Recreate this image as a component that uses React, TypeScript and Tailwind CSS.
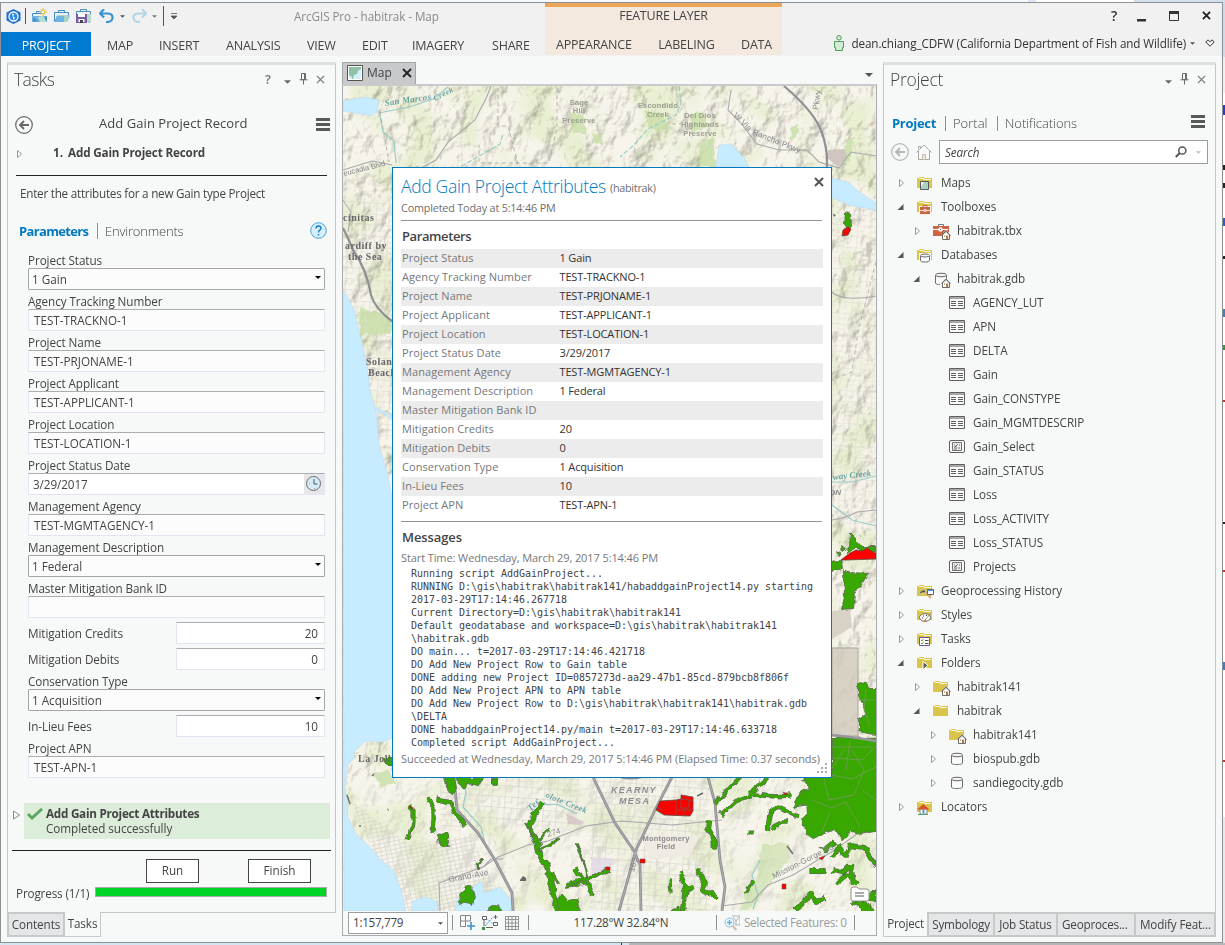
import React from "react";

const ribbonTabs = [
  { label: "MAP", cls: "w-[58px] pl-4" },
  { label: "INSERT", cls: "w-[67px] pl-[10px]" },
  { label: "ANALYSIS", cls: "w-[81px] pl-[10px]" },
  { label: "VIEW", cls: "w-[55px] pl-[10px]" },
  { label: "EDIT", cls: "w-[50px] pl-[10px]" },
  { label: "IMAGERY", cls: "w-[79px] pl-[10px]" },
  { label: "SHARE", cls: "w-[60px] pl-[11px]" },
];

const attributes = [
  ["Project Status", "1 Gain"],
  ["Agency Tracking Number", "TEST-TRACKNO-1"],
  ["Project Name", "TEST-PRJONAME-1"],
  ["Project Applicant", "TEST-APPLICANT-1"],
  ["Project Location", "TEST-LOCATION-1"],
  ["Project Status Date", "3/29/2017"],
  ["Management Agency", "TEST-MGMTAGENCY-1"],
  ["Management Description", "1 Federal"],
  ["Master Mitigation Bank ID", ""],
  ["Mitigation Credits", "20"],
  ["Mitigation Debits", "0"],
  ["Conservation Type", "1 Acquisition"],
  ["In-Lieu Fees", "10"],
  ["Project APN", "TEST-APN-1"],
];

const messages = [
  "Running script AddGainProject...",
  "RUNNING D:\\gis\\habitrak\\habitrak141/habaddgainProject14.py starting",
  "2017-03-29T17:14:46.267718",
  "Current Directory=D:\\gis\\habitrak\\habitrak141",
  "Default geodatabase and workspace=D:\\gis\\habitrak\\habitrak141",
  "\\habitrak.gdb",
  "DO main... t=2017-03-29T17:14:46.421718",
  "DO Add New Project Row to Gain table",
  "DONE adding new Project ID=0857273d-aa29-47b1-85cd-879bcb8f806f",
  "DO Add New Project APN to APN table",
  "DO Add New Project Row to D:\\gis\\habitrak\\habitrak141\\habitrak.gdb",
  "\\DELTA",
  "DONE habaddgainProject14.py/main t=2017-03-29T17:14:46.633718",
  "Completed script AddGainProject...",
];

type Node = { label: string; level: 0 | 1 | 2; icon: string; arrow?: "open" | "closed" };
const tree: Node[] = [
  { label: "Maps", level: 0, icon: "f-map", arrow: "closed" },
  { label: "Toolboxes", level: 0, icon: "f-tool", arrow: "open" },
  { label: "habitrak.tbx", level: 1, icon: "tbx", arrow: "closed" },
  { label: "Databases", level: 0, icon: "f-db", arrow: "open" },
  { label: "habitrak.gdb", level: 1, icon: "db-home", arrow: "open" },
  { label: "AGENCY_LUT", level: 2, icon: "table" },
  { label: "APN", level: 2, icon: "table" },
  { label: "DELTA", level: 2, icon: "table" },
  { label: "Gain", level: 2, icon: "table" },
  { label: "Gain_CONSTYPE", level: 2, icon: "table" },
  { label: "Gain_MGMTDESCRIP", level: 2, icon: "table" },
  { label: "Gain_Select", level: 2, icon: "fc" },
  { label: "Gain_STATUS", level: 2, icon: "table" },
  { label: "Loss", level: 2, icon: "table" },
  { label: "Loss_ACTIVITY", level: 2, icon: "table" },
  { label: "Loss_STATUS", level: 2, icon: "table" },
  { label: "Projects", level: 2, icon: "fc" },
  { label: "Geoprocessing History", level: 0, icon: "f-geo", arrow: "closed" },
  { label: "Styles", level: 0, icon: "f-style", arrow: "closed" },
  { label: "Tasks", level: 0, icon: "f-task", arrow: "closed" },
  { label: "Folders", level: 0, icon: "f-folder", arrow: "open" },
  { label: "habitrak141", level: 1, icon: "folder-home", arrow: "closed" },
  { label: "habitrak", level: 1, icon: "folder", arrow: "open" },
  { label: "habitrak141", level: 2, icon: "folder-home", arrow: "closed" },
  { label: "biospub.gdb", level: 2, icon: "db", arrow: "closed" },
  { label: "sandiegocity.gdb", level: 2, icon: "db", arrow: "closed" },
  { label: "Locators", level: 0, icon: "f-loc", arrow: "closed" },
];

const Folder = () => (
  <>
    <path d="M0 12V2h2V1h5v1h8v10z" fill="#d9c54a" />
    <path d="M2 2.500h5v1h7" fill="none" stroke="#fbf7dc" />
  </>
);
const House = () => (
  <g transform="translate(8 6)">
    <path d="M0.500 5.500L5 0.800l4.500 4.700M1.500 4.800V9.500h7V4.800L5 1.500z" fill="#fff" stroke="#6b6b6b" />
    <path d="M5 5.500h2.200V9H5z" fill="#bd7b2c" />
    <path d="M3 5.500h1v1H3z" fill="#777" />
  </g>
);
const Cylinder = () => (
  <>
    <path d="M2.500 3v8c0 1 1.500 1.500 5.500 1.500s5.500-.5 5.500-1.500V3" fill="#fafafa" stroke="#6b6b6b" />
    <ellipse cx="8" cy="3" rx="5.500" ry="1.800" fill="#f3f3f3" stroke="#6b6b6b" />
  </>
);
function TreeIcon({ kind }: { kind: string }) {
  return (
    <svg className="h-[17px] w-[19px] shrink-0 overflow-visible" viewBox="0 0 19 17">
      {(kind.startsWith("f-") || kind.startsWith("folder")) && <Folder />}
      {kind === "f-map" && (
        <>
          <path d="M3.500 5.500h8v8h-8z" fill="#a9d3c0" stroke="#5a5a5a" />
          <path d="M4 6h3L4 11z" fill="#e9f5fb" />
        </>
      )}
      {kind === "f-tool" && (
        <>
          <path d="M2 6h12v9H2z" fill="#fdf3e4" />
          <path d="M6 7V5.500h4V7" fill="none" stroke="#c95f41" />
          <path d="M3 7h10v7H3z" fill="#cb6544" />
          <path d="M3 10.500h4m2 0h4M7 9.500h2v2H7z" stroke="#fff" strokeWidth=".8" fill="none" />
        </>
      )}
      {kind === "tbx" && (
        <>
          <path d="M5.500 3V.5h5V3" fill="none" stroke="#777" />
          <path d="M0 2h16v10H0z" fill="#cb6544" />
          <path d="M0 5.500h6m3 0h6M6 4h3v3H6z" stroke="#fff" fill="#fff" />
          <path d="M7 5h1v1H7z" fill="#555" />
          <path d="M8 12l5-6 5 5v5H8z" fill="#fff" />
          <House />
        </>
      )}
      {kind === "f-db" && (
        <>
          <path d="M2 5h12v10H2z" fill="#f7f9f8" />
          <path d="M3.500 8v4.500c0 1 1.500 1.500 4.500 1.500s4.500-.5 4.500-1.500V8" fill="#fff" stroke="#6b6b6b" />
          <ellipse cx="8" cy="7.500" rx="4.500" ry="1.500" fill="#f3f3f3" stroke="#6b6b6b" />
        </>
      )}
      {kind === "db-home" && (
        <>
          <Cylinder />
          <path d="M7 12l6-6 5 5v5H8z" fill="#f7f9f8" />
          <House />
        </>
      )}
      {kind === "db" && <Cylinder />}
      {kind === "table" && (
        <>
          <path d="M.5.5h15v12H.5z" fill="#fbfbfb" stroke="#606063" />
          <path d="M1 1h14v2H1z" fill="#a8a8ac" />
          <path d="M2 5.500h5M2 7.500h5M2 9.500h5M9 5.500h5M9 7.500h5M9 9.500h5" stroke="#606063" />
        </>
      )}
      {kind === "fc" && (
        <>
          <rect x=".5" y=".5" width="15" height="12" rx="1.500" fill="#fbfbfb" stroke="#606063" />
          <path d="M3.500 2.500h9v8h-9z" fill="#ececec" stroke="#707074" />
          <path d="M5 5h1M9 4l-2 2v4M7 6L5 7.500M10 5h1M9 8h2M5 9h1" stroke="#606063" strokeWidth=".9" fill="none" />
        </>
      )}
      {kind === "f-geo" && (
        <>
          <path d="M2 9q3-4 7-3l-1 3q-3-1-5 1z" fill="#4b5557" stroke="#fff" strokeWidth=".5" />
          <path d="M8 8l6 6" stroke="#dcae7c" strokeWidth="2" />
          <path d="M10.500 5.500h6v5h-6z" fill="#fff" stroke="#5a6a70" />
          <path d="M11 6h5v1h-5z" fill="#3e9fe0" />
        </>
      )}
      {kind === "f-style" && (
        <>
          <ellipse cx="8" cy="9.500" rx="5.500" ry="3.800" fill="#fff" stroke="#6d6d6d" />
          <path d="M6 8h1M5 10h1M9 7.500h1" stroke="#333" />
          <path d="M8 12l6-7" stroke="#999" />
          <path d="M7 12h2v2H7z" fill="#cf7a3c" />
        </>
      )}
      {kind === "f-task" && (
        <>
          <path d="M2.500 5.500h10v8h-10z" fill="#fff" stroke="#6f5499" />
          <path d="M4 8l1 1 1.500-2M4 11l1 1 1.500-2" stroke="#53a053" fill="none" />
          <path d="M8 8.500h3.500M8 11.500h3.500" stroke="#555" />
        </>
      )}
      {kind === "f-folder" && <path d="M6 5.500v8l5-4z" fill="#5a5a5a" stroke="#fff" />}
      {kind === "folder-home" && (
        <>
          <path d="M8 12l5-6 5 5v5H8z" fill="#fff" />
          <House />
        </>
      )}
      {kind === "f-loc" && (
        <>
          <path d="M3 9h7v5H3z" fill="#fff" stroke="#7b8c9b" />
          <path d="M0 9.500L6.500 4l6 5.500z" fill="#d9512f" />
          <path d="M5.500 10h2v3h-2z" fill="#3f9cd6" />
          <path d="M1 14.500h10" stroke="#5aa469" />
        </>
      )}
    </svg>
  );
}

function Arrow({ state }: { state?: "open" | "closed" }) {
  return (
    <svg className="h-2.5 w-2.5 shrink-0" viewBox="0 0 10 10">
      {state === "open" && <path d="M7.500 2v6h-6z" fill="#555" />}
      {state === "closed" && <path d="M3.500 1.500v7l4-3.500z" fill="#fff" stroke="#9a9a9a" />}
    </svg>
  );
}

const Caret = ({ cls }: { cls: string }) => (
  <svg className={cls} viewBox="0 0 8 4">
    <path d="M0 0h8L4 4z" fill="currentColor" />
  </svg>
);
const Pin = () => (
  <svg className="h-3 w-[9px]" viewBox="0 0 9 12">
    <path d="M2.500.5h4v6h-4zM.5 6.800h8M4.500 7v4.500M5.500 1v5" fill="none" stroke="#6b6b6b" />
  </svg>
);
const Cross = ({ cls, w = 1.4 }: { cls: string; w?: number }) => (
  <svg className={cls} viewBox="0 0 10 10">
    <path d="M1 1l8 8M9 1L1 9" stroke="currentColor" strokeWidth={w} fill="none" />
  </svg>
);
const Burger = () => (
  <svg className="h-[13px] w-[14px]" viewBox="0 0 14 13">
    <path d="M0 1.500h14M0 6.500h14M0 11.500h14" stroke="#58595b" strokeWidth="3" />
  </svg>
);
const BackCircle = ({ color }: { color: string }) => (
  <svg className="size-[18px]" viewBox="0 0 18 18">
    <circle cx="9" cy="9" r="8.300" fill="none" stroke={color} strokeWidth="1.200" />
    <path d="M14 9H5M9 5L5 9l4 4" fill="none" stroke={color} strokeWidth="1.800" />
  </svg>
);

const boxBase = "flex h-[22px] w-full items-center border text-[11.700px] rounded-[1px]";
function Field({ label, value, kind = "text" }: { label: string; value: string; kind?: "text" | "select" | "date" }) {
  return (
    <div>
      <div className="flex h-[15px] items-center whitespace-nowrap pt-px text-[11.700px] leading-none tracking-[-0.080px]">{label}</div>
      {kind === "text" && (
        <div className={boxBase + " border-[#e3e5f0] border-t-[#abadb3] bg-[#fcfcfc] pl-[5px] pt-px"}>{value}</div>
      )}
      {kind === "select" && (
        <div className={boxBase + " justify-between border-[#a5a6a9] bg-[#fcfcfc] pl-[3px] pr-[3px] pt-px"}>
          {value}
          <Caret cls="mb-1 h-[3px] w-[6px] text-black" />
        </div>
      )}
      {kind === "date" && (
        <div className={boxBase + " justify-between border-[#e3e5f0] border-t-[#abadb3] bg-white pl-[4px]"}>
          <span className="pt-[2px] tracking-[-0.080px]">{value}</span>
          <div className="flex h-full w-5 items-center justify-center bg-[#e6e7e8]">
            <svg className="size-4" viewBox="0 0 16 16">
              <circle cx="7.500" cy="7.500" r="7" fill="#d6ebf8" stroke="#6d6e70" />
              <path d="M8 3v5h3.500" fill="none" stroke="#555" />
              <path d="M8 12.500h.8M3 7.500h.8" stroke="#888" />
            </svg>
          </div>
        </div>
      )}
    </div>
  );
}
function NumberField({ label, value }: { label: string; value: string }) {
  return (
    <div className="flex h-[22px] items-center justify-between text-[11.700px]">
      <span className="pt-[2px] tracking-[-0.080px]">{label}</span>
      <div className="flex h-full w-[149px] items-center justify-end border border-[#e3e5f0] border-t-[#abadb3] bg-white pr-[6px] pt-[2px]">
        {value}
      </div>
    </div>
  );
}

const G = "#38a800";
const OUT = "#5c6b54";
function Strip({ d, w }: { d: string; w: number }) {
  return (
    <g fill="none" strokeLinejoin="bevel">
      <path d={d} stroke={OUT} strokeWidth={w + 1.2} />
      <path d={d} stroke={G} strokeWidth={w - 0.3} />
    </g>
  );
}

function MapCanvas() {
  return (
    <svg className="block h-[825px] w-full" viewBox="343 86 533 825" preserveAspectRatio="none">
      <defs>
        <filter id="relief" x="0" y="0" width="100%" height="100%" colorInterpolationFilters="sRGB">
          <feTurbulence type="fractalNoise" baseFrequency="0.05 0.038" numOctaves="4" seed="5" />
          <feDiffuseLighting surfaceScale="7" diffuseConstant="1.220" lightingColor="#fffaf0">
            <feDistantLight azimuth="225" elevation="58" />
          </feDiffuseLighting>
        </filter>
        <filter id="tint" x="0" y="0" width="100%" height="100%" colorInterpolationFilters="sRGB">
          <feTurbulence type="fractalNoise" baseFrequency="0.025" numOctaves="2" seed="21" />
          <feColorMatrix values="0 0 0 0 .82  0 0 0 0 .9  0 0 0 0 .66  0 5 0 0 -2.300" />
        </filter>
        <filter id="rough" x="-5%" y="-5%" width="110%" height="110%">
          <feTurbulence type="fractalNoise" baseFrequency="0.130" numOctaves="2" seed="3" />
          <feDisplacementMap in="SourceGraphic" scale="6" xChannelSelector="R" yChannelSelector="G" />
        </filter>
        <pattern id="streets" width="13" height="11" patternUnits="userSpaceOnUse" patternTransform="rotate(4)">
          <path d="M0 .5h13M.5 0v11M7 0v6M0 6h7" stroke="#d6d3cb" strokeWidth=".6" fill="none" />
        </pattern>
        <pattern id="blocks" width="5" height="4" patternUnits="userSpaceOnUse" patternTransform="rotate(-12)">
          <path d="M0 .5h5M.5 0v4" stroke="#d2d0c9" strokeWidth=".6" fill="none" />
        </pattern>
      </defs>
      <rect x="343" y="86" width="533" height="825" fill="#f6f4eb" />
      <rect x="343" y="86" width="533" height="825" filter="url(#tint)" opacity=".34" />
      <rect x="343" y="86" width="533" height="690" filter="url(#relief)" opacity=".34" style={{ mixBlendMode: "multiply" }} />
      <rect x="343" y="776" width="533" height="135" filter="url(#relief)" opacity=".16" style={{ mixBlendMode: "multiply" }} />
      <rect x="343" y="200" width="50" height="240" fill="url(#streets)" opacity=".8" />
      <rect x="832" y="210" width="44" height="320" fill="url(#streets)" opacity=".6" />
      <path d="M590 777h120v134H590zM440 777h140v50H440z" fill="url(#streets)" />
      <path d="M350 800l60 45 60-10 30 60-20 16H400z" fill="url(#blocks)" />

      <g fill="#c9dfa8" opacity=".8" filter="url(#rough)">
        <path d="M570 112l14 5 3 18-14-3zM645 110l18 4 5 18-20-4zM690 114l14-2 3 14-15 6zM700 146l12-10 5 30h-18zM593 133l9 1v9l-8 1zM846 140l9-3-5 24-8 2zM790 126l9-2v10l-8 6z" />
        <path d="M359 308l30 8 3 14v4h-32z" />
        <path d="M372 774l18-4 5 13-14 4z" />
        <path d="M762 845l28-2-3 20-28 35-12 13h-8l18-35z" opacity=".8" />
      </g>
      <path d="M828 150l17-1 2 8-9 10-12-10z" fill="#cfc6c0" />
      <path d="M832 648h26v88h-26z" fill="#d3cdbf" fillOpacity=".85" stroke="#aaa59a" />
      <path d="M832 611l18-2 2 18-20 12z" fill="#d8d2c6" />
      <path d="M640 835h60l-10 20-40 5z" fill="#efebe2" />
      <path d="M566 813l18 9-4 3-12-1z" fill="#d9cbc9" />
      <path d="M592 858h20v12l-20 4z" fill="#e2d8e6" opacity=".8" />

      <g fill="#c7ebff" stroke="#b5d7ea" strokeWidth=".5">
        <path d="M343 289l11 20 6 26 7 30 3 25 6 22 3 33 9 30 4 25v238l-9 4-17-1-6 5-6 6v6l-6 7-3 22 3 30 7 16 15 14 9 11 14 12 8 20 5 21h-62z" />
        <path d="M343 101l22-4 14 3-2 11-5 5-29-5z" />
        <path d="M719 145l12-1 13 14 5 9h-33z" />
        <path d="M832 178l16 4 10 9 18 12v7l-24-4-20-8z" />
        <path d="M411 911l2-10 13-4 11 5 1 9zM455 911l2-11 10-10 15-9 2 12 16-6 12 14 1 10z" />
        <path d="M375 410q8 2 17 10v-4q-8-5-16-8z" />
      </g>

      <g fill="none" stroke="#8fc9c4" strokeWidth="1.200" opacity=".9">
        <path d="M379 113l30-6 24-8 15-12M379 110l4 22 11 9 2 22" />
        <path d="M679 86l2 17-5 12-28 14-14 16-14 12M455 170l45-26 3-10" strokeDasharray="5 2" />
        <path d="M832 482h20l24-6M832 505l20 15 24 6" />
        <path d="M537 802q10 4 20 2l20 10M760 860l-8 15 6 20-5 14" />
        <path d="M458 777l8 15-3 15 18 20 5 20" />
      </g>

      <g fill="none" stroke="#a9a9ad" strokeWidth="1.100">
        <path d="M491 86q-5 14-10 22l-6 12-27 22-12 18-15 8M392 165l-20-4-29 9" />
        <path d="M728 110l12 12 17 22 22 6 28 0 12 12 20 6 12-16 25 4M728 110l3-20" />
        <path d="M832 292q10 10 44 4M832 520q14-2 25-8l19-2" />
        <path d="M440 911l-1-28 44-16 15-10 30-12 20-4 38-15 36-5 50 4 50-5M483 867l8-8h12M722 906l30-4 16-17 25-10 40-24 24-17 20-3" />
        <path d="M343 200l8 12-3 20" strokeWidth="1" />
      </g>
      <g fill="none" stroke="#8f8f95" strokeWidth="2.200">
        <path d="M784 86q28 24 36 42 8 18 7 40" />
        <path d="M343 228q7 14 10 22 14 20 18 45 4 14 22 27" />
        <path d="M454 777l3 33 21 23 17 27 17 33 1 18M593 777l22 46 19 28 6 14 1 46M672 777l-17 33-19 40-17 61M708 777l7 26 5 57 5 27-3 24" strokeWidth="2.800" />
        <path d="M620 777q10 3 22 0" />
      </g>
      <path d="M454 777l3 33 21 23 17 27 17 33 1 18M593 777l22 46 19 28 6 14 1 46M672 777l-17 33-19 40-17 61M708 777l7 26 5 57 5 27-3 24" fill="none" stroke="#b9b9bd" strokeWidth=".7" />
      <g fill="none" stroke="#aaa69e" strokeDasharray="4 3" strokeWidth=".8">
        <path d="M380 112l9 50M498 88v38h10l10 38M557 88v40l-8 35h-70v-18M672 124h10l10 10M876 262l-18 70-6 40-20 8" />
      </g>

      <g filter="url(#rough)" transform="translate(0.500 0.500)">
        <g fill={G} stroke={OUT} strokeWidth=".9">
          <path d="M832 737l50 1v92l-20 3-12-2-8 10-8-12-20 8-8-3-4-16 5-5-1-9-13 3 4-14 12-4-7-10 6-3h24z" />
          <path d="M858 682l7 1 3 4h12v48l-22-4v-12l8-6-4-10-4-8z" />
          <path d="M843 569l8 4 16 1-7 12-6 4-1 18-12 1 3-14z" />
          <path d="M849 532l8 8 5 6h18v6l-24-3-5 1-4 3z" />
          <path d="M845 213l5 1 1 12-4 3-3-5zM828 561l12-1 2 8-14 4zM836 551l5 2-3 4zM842 546l4 3-3 3z" />
          <path d="M444 777h10l2 12-3 4-6-4zM457 777h25l-4 8-12-2-1 5-7-3zM492 777h5v6l-5 2z" />
          <path d="M437 834l9-2 3 13-9 2zM463 888l6-3 6 7-3 12-8-3-4 2-1-8zM488 911q0-7 6-7t6 7z" />
          <path d="M382 757h11v8h-7z" />
          <path d="M565 885l22-5 2 3-24 4zM556 902l6-8 5 6 10-2 5 18H554zM875 890l-10 5 3 5 8 3z" />
          <path d="M858 905l-7-3 4-6 14 8 5 9h-12z" />
        </g>
        <Strip w={3} d="M409 806l4 4v12l-6 18" />
        <Strip w={3} d="M427 797l6 10 0 13-1 13" />
        <Strip w={3.500} d="M436 799l14 3 5 10 10 13" />
        <Strip w={5} d="M543 802l-10 14-4 11 8 16 1 8 9 16 5 20 5 24" />
        <Strip w={2} d="M537 843l11-15M538 850l20-11M525 823l8 12M552 872l6 12" />
        <Strip w={3} d="M566 884l22-6 20-9M588 878l3 17M575 868l6 10" />
        <Strip w={1} d="M576 843l8 20 4 14M479 870q-5-6 4-12" />
        <Strip w={4} d="M709 821l-1 8 5 8 1 13" />
        <Strip w={3} d="M714 803l14-14 12-13" />
        <Strip w={3.500} d="M720 815l16-15 17-6 20 2 17-1M750 793l18-16" />
        <Strip w={3.500} d="M767 830l4-20 7-4 20 10M772 830l8-9h8" />
        <Strip w={4} d="M679 872l6 14-3 24M682 891l10-4M697 869l8 14-4 6 17 8" />
        <Strip w={3} d="M670 880l1 12M671 911l8-3M745 893l8-13M747 832h7" />
        <Strip w={4.500} d="M794 910l10-8 6-9 4 8 10-3" />
        <Strip w={4} d="M834 857l4-12 7 12 5-12 14 2 12 18" />
        <Strip w={4} d="M832 870l10 2 8-8 3 20M810 870l15 0M822 851l12-10M835 883l12-9 10 8" />
      </g>
      <g fill="#f00" stroke="#5a4a42" strokeWidth=".8">
        <path d="M656 810l4-9 16-1 5-1v-4l12 2v14l-3 5-26-1z" />
        <path d="M676 800v16M681 799l8 1v8h-8v-9M689 800l4 1M677 810h15M684 810v5M658 808l5 2" fill="none" stroke="#6b5a52" />
        <path d="M841 560l9-7 6-3 6 1 5-3 6 4 3 1v6l-30 1z" />
        <path d="M843 230l5-3 3 2-3 6-6 1z" />
        <path d="M606 867h4v3h-4zM640 859h5v4h-5zM783 792l5 2-3 1zM782 884h4v5h-4zM819 858l6-2-3 4zM408 806l4 1 1 3z" strokeWidth=".5" />
      </g>
      <path d="M787 846l6 8M372 776l2-2M347 795l3 9M360 825v2M697 796l6-3" stroke="#6d6d6d" fill="none" strokeWidth="1.500" />
      <path d="M520 880l3-4 3 2v3h-6zM387 808l2 2-1 1zM833 214l3 1-2 2z" fill="#666" />
      <g fill="none" stroke="#6f9c59" strokeWidth=".9">
        <path d="M844 750l-20 30 5 20 25-5 10-25-12-20M832 747h40M832 758l30 2 14-14M812 800l20 8 14-6 14 25M830 812l-8 20M859 700h17M866 690l-2 20 6 15M832 775l20 4 24-12M850 740l-4 30M862 790l14 10" />
      </g>
      <path d="M832 735q20 2 44 6" fill="none" stroke="#98989c" strokeWidth="2.500" />

      <g fontFamily="'Liberation Serif', serif" fontSize="10" fill="#68686b" fontWeight="bold" letterSpacing=".5">
        <text x="343" y="221">cinitas</text>
        <text x="345" y="249">ardiff by</text>
        <text x="348" y="260">the Sea</text>
        <text x="366" y="365">Solan</text>
        <text x="368" y="376">Beach</text>
        <text x="358" y="762">La Jolla</text>
      </g>
      <g fontFamily="'Liberation Serif', serif" fontSize="9.500" fontStyle="italic" fontWeight="bold" fill="#6aa5a1" letterSpacing=".4">
        <text transform="translate(385 106) rotate(-8)" fontSize="9" letterSpacing=".2">San Marcos</text>
        <text transform="translate(435 101) rotate(-27)" fontSize="8">Creek</text>
        <text transform="translate(833 480) rotate(-6)" fontSize="9" letterSpacing="0">way Creek</text>
        <text transform="translate(531 812) rotate(-48)">Tec</text>
        <text transform="translate(545 797) rotate(22)" fontSize="8.500">olote Creek</text>
      </g>
      <g fontFamily="'Liberation Sans', sans-serif" fontSize="7.500" fontWeight="bold" fill="#99a08e" letterSpacing=".2" textAnchor="middle">
        <text x="579" y="105">Sage</text>
        <text x="579" y="113">Hill</text>
        <text x="579" y="123">Preserve</text>
        <text x="658" y="108">Escondido</text>
        <text x="658" y="117">Creek</text>
        <text x="700" y="118">Del Dios</text>
        <text x="700" y="127">Highlands</text>
        <text x="700" y="136">Preserve</text>
        <text x="666" y="841" fill="#8b8b8b">Montgomery</text>
        <text x="666" y="849" fill="#8b8b8b">Field</text>
      </g>
      <g fontFamily="'Liberation Sans', sans-serif" fontSize="8" fill="#85858a" letterSpacing=".2">
        <text transform="translate(344 176) rotate(-14)" fontSize="7.500" letterSpacing="0">eucadia Blvd</text>
        <text transform="translate(733 116) rotate(44)">W Via</text>
        <text transform="translate(752 134) rotate(22)">Rancho Pkwy</text>
        <text transform="translate(818 110) rotate(-82)">Pkwy</text>
        <text transform="translate(449 882) rotate(-10)">Grand-Ave</text>
        <text transform="translate(548 837) rotate(-18)">274</text>
        <text transform="translate(634 872) rotate(-75)">163</text>
        <text transform="translate(774 879) rotate(-27)">Mission-Gorge Rd</text>
      </g>
      <g fontFamily="'Liberation Sans', sans-serif" fontSize="9" fontWeight="bold" fontStyle="italic" fill="#8b8b8f" letterSpacing="1.300">
        <text x="611" y="793">KEARNY</text>
        <text x="619" y="804">MESA</text>
        <text x="829" y="495" fontSize="8" letterSpacing="0">ON</text>
      </g>

      <g transform="translate(850 886)">
        <path d="M1 3q0-2 2-2h4l2 2h7q3 0 3 2v8q0 2-2 2H3q-2 0-2-2z" fill="#fff" stroke="#8f8f8f" />
        <path d="M5 7h9M5 10h9" stroke="#555" />
        <path d="M6 15v2M13 15v2" stroke="#555" />
      </g>
    </svg>
  );
}

function Dialog() {
  return (
    <div className="absolute left-[50px] top-[105px] flex h-[611px] w-[440px] flex-col border border-[#0079c1] bg-white px-2 pt-[8px]">
      <div className="flex h-5 items-center whitespace-nowrap">
        <span className="w-[209px] text-[17.500px] font-light tracking-[-0.320px] text-[#0079c1]">Add Gain Project Attributes</span>
        <span className="grow pt-1 text-[10.800px] tracking-[-0.260px] text-[#6e6e6e]">(habitrak)</span>
        <Cross cls="mb-2 mr-[-1px] size-2.5 text-[#555]" w={2} />
      </div>
      <div className="mt-px flex h-[23px] items-center text-[10.800px] tracking-[-0.170px] text-[#6e6e6e]">Completed Today at 5:14:46 PM</div>
      <div className="h-px w-[421px] bg-[#949494]" />
      <div className="flex h-7 items-center pl-px pt-1 text-[13px] font-semibold tracking-[-0.400px]">Parameters</div>
      <div className="w-[422px]">
        {attributes.map(([k, v], i) => (
          <div key={k} className={"flex h-[19px] items-center text-[11px] " + (i % 2 ? "bg-white" : "bg-[#ececec]")}>
            <span className="w-[158.500px] whitespace-nowrap pl-px tracking-[0.070px] text-[#76777a]">{k}</span>
            <span className="tracking-[-0.150px] text-[#333]">{v}</span>
          </div>
        ))}
      </div>
      <div className="mt-[6px] h-px w-[421px] shrink-0 bg-[#949494]" />
      <div className="flex h-[30px] items-center pl-px pt-[2px] text-[13px] font-semibold tracking-[-0.100px]">Messages</div>
      <div className="flex h-[15px] items-center pb-[3px] text-[11px] tracking-[-0.100px] text-[#76777a]">Start Time: Wednesday, March 29, 2017 5:14:46 PM</div>
      <div className="whitespace-pre pl-[10px] font-['DejaVu_Sans_Mono',monospace] text-[10px] leading-[13px] tracking-[-0.020px] text-[#444]">
        {messages.map((m) => (
          <div key={m}>{m}</div>
        ))}
      </div>
      <div className="flex h-[18px] items-center justify-between whitespace-nowrap pt-[3px] text-[11px] tracking-[-0.070px] text-[#76777a]">
        Succeeded at Wednesday, March 29, 2017 5:14:46 PM (Elapsed Time: 0.37 seconds)
      </div>
      <svg className="mt-[-4px] mr-[-5px] size-[11px] shrink-0 self-end" viewBox="0 0 11 11">
        <path d="M8 0h2v2H8zM4 4h2v2H4zM8 4h2v2H8zM0 8h2v2H0zM4 8h2v2H4zM8 8h2v2H8z" fill="#a9a9a9" />
      </svg>
    </div>
  );
}

const Sep = ({ cls }: { cls: string }) => <div className={"w-px shrink-0 bg-[#8e8f91] " + cls} />;

function Header() {
  return (
    <div className="flex h-[53px] shrink-0 bg-[#f1f1f1]">
      <div className="flex w-[544px] flex-col">
        <div className="flex h-[29px] items-center pb-[3px] pl-[5px]">
          <svg className="size-[15px]" viewBox="0 0 15 15">
            <path d="M7.500 0l7 3.500v8l-7 3.500-7-3.500v-8z" fill="#1f6fd1" />
            <circle cx="7.500" cy="7.500" r="4.500" fill="#2b88e8" stroke="#fff" strokeWidth="1.300" />
            <path d="M6 4.500l2.500 1L7 7l2 2-1.500 2z" fill="#fff" />
          </svg>
          <Sep cls="ml-[4px] h-4 !bg-[#555]" />
          <svg className="ml-[6px] h-4 w-4" viewBox="0 0 16 16">
            <path d="M.5 13.500V5.500h11" fill="none" stroke="#3f8dc2" />
            <path d="M4.500 5V3.500h4" fill="none" stroke="#3f8dc2" />
            <path d="M0 8h15v6H0z" fill="#6eb4e0" />
            <path d="M1 9l5 4-5 1zM15 8v6H8z" fill="#4593c8" />
            <path d="M6 9l5-1 4 6H8z" fill="#b9ddd5" />
            <path d="M11 0v8M7 4h8M8.500 1.500l5 5M13.500 1.500l-5 5" stroke="#d9bc33" />
            <circle cx="11" cy="4" r="1.800" fill="#fff" stroke="#d9bc33" strokeWidth=".8" />
          </svg>
          <svg className="ml-[6px] h-4 w-4" viewBox="0 0 16 16">
            <path d="M.5 13.500V4.500h14v3M4.500 4V2.500h6V4" fill="none" stroke="#3f8dc2" />
            <path d="M3 7.500h13l-3 6.500H0z" fill="#6eb4e0" />
            <path d="M10 8h5l-2 6h-3z" fill="#a9d5c4" />
          </svg>
          <svg className="ml-[6px] h-4 w-4" viewBox="0 0 16 16">
            <path d="M.5 7V3.500h14V14H12M4.500 3V1.500h6V3" fill="none" stroke="#4c8ebc" />
            <path d="M11 6h4v8h-4z" fill="#b5dccb" />
            <path d="M0 6h11v9H0z" fill="#7a5ba6" />
            <path d="M2 6h7v3H2zM2.500 11h6v3h-6z" fill="#fff" />
            <path d="M4 12h3v3H4z" fill="#444" />
          </svg>
          <svg className="ml-[7px] h-3.5 w-[15px]" viewBox="0 0 15 14">
            <path d="M5 0L1 4.500l4 4M1 4.500h7q6 0 5.500 4.500-.5 4-5.500 4H7" fill="none" stroke="#3a92cf" strokeWidth="2.200" />
          </svg>
          <Caret cls="ml-[6px] h-[3px] w-[5px] text-[#555]" />
          <svg className="ml-[7px] h-3.5 w-[15px] -scale-x-100" viewBox="0 0 15 14">
            <path d="M5 0L1 4.500l4 4M1 4.500h7q6 0 5.500 4.500-.5 4-5.500 4H7" fill="none" stroke="#b3d5e8" strokeWidth="2.200" />
          </svg>
          <Caret cls="ml-[5px] h-[3px] w-[5px] text-[#777]" />
          <Sep cls="ml-[6px] h-5 !bg-[#555]" />
          <svg className="ml-[7px] h-[6px] w-[6px]" viewBox="0 0 6 6">
            <path d="M0 .5h6M0 3h6L3 6z" fill="#555" stroke="#555" strokeWidth=".8" />
          </svg>
          <span className="ml-[117px] whitespace-nowrap pt-px text-[11.700px] tracking-[-0.080px] text-[#8a8a8c]">ArcGIS Pro - habitrak - Map</span>
        </div>
        <div className="flex h-6 items-center whitespace-nowrap text-[12.500px] tracking-[-0.200px] text-[#444]">
          <div className="flex h-full w-[90px] items-center justify-center bg-[#0079d0] pt-[4px] text-white">PROJECT</div>
          {ribbonTabs.map((t) => (
            <div key={t.label} className={"shrink-0 pt-[4px] " + t.cls}>{t.label}</div>
          ))}
        </div>
      </div>
      <div className="flex h-[52px] w-[237px] flex-col border-t-4 border-[#eba65a] bg-[#f3e9de] text-[12.500px] tracking-[-0.200px] text-[#444]">
        <div className="flex h-[18px] items-center justify-center pt-px">FEATURE LAYER</div>
        <div className="flex grow items-center justify-between pb-[2px] pl-[11px] pr-[10px] pt-[11px]">
          <span>APPEARANCE</span>
          <span>LABELING</span>
          <span>DATA</span>
        </div>
      </div>
      <div className="flex grow flex-col text-[#333]">
        <div className="flex h-[27px] items-center justify-end pb-[2px] pr-[11px]">
          <span className="w-[26px] text-[14px] font-semibold">?</span>
          <svg className="mr-[23px] h-3 w-[9px]" viewBox="0 0 9 12"><path d="M0 9h9v2.500H0z" fill="#333" /></svg>
          <svg className="mr-[23px] size-[10px]" viewBox="0 0 10 10">
            <path d="M.5.5h9v9h-9z" fill="none" stroke="#333" />
            <path d="M0 0h10v3H0z" fill="#333" />
          </svg>
          <Cross cls="size-[9px] text-[#222]" w={2} />
        </div>
        <div className="flex h-[26px] items-center justify-end pb-[2px] pr-[7px] pt-[2px]">
          <svg className="h-4 w-2.5" viewBox="0 0 10 16">
            <circle cx="5" cy="2.800" r="2.300" fill="#d5ead8" stroke="#4f9c5a" />
            <path d="M.5 6.500h9v6h-1v3h-7v-3h-1z" fill="#d5ead8" stroke="#4f9c5a" />
          </svg>
          <span className="ml-[7px] whitespace-nowrap pt-px text-[11.700px] tracking-[-0.110px]">dean.chiang_CDFW (California Department of Fish and Wildlife)</span>
          <Caret cls="ml-1 h-[3px] w-[5px] text-[#555]" />
          <svg className="ml-[10px] h-[8px] w-2.5" viewBox="0 0 10 8">
            <path d="M5 7.300L.8 3 3 .8l2 2 2-2L9.200 3z" fill="none" stroke="#333" />
          </svg>
        </div>
      </div>
    </div>
  );
}

const panel = "flex flex-col border border-t-[3px] border-[#c3c6c5] border-t-[#dde0df]";

export default function App() {
  return (
    <div className="flex h-[945px] w-[1225px] flex-col overflow-hidden bg-[#dfe9f3] font-['Open_Sans','Noto_Sans',sans-serif] text-[#444]">
      <div className="flex h-[2px] shrink-0 bg-[#f5faff]">
        <div className="w-[1028px]" />
        <div className="w-[8px] bg-[#dce8f5]" />
        <div className="w-[98px] bg-white" />
        <div className="grow bg-[#d3deec]" />
      </div>
      <div className="flex h-[941px] shrink-0">
        <div className="flex w-[1223px] flex-col border border-[#8d9194] bg-[#f7f9f8]">
          <Header />
          <div className="flex grow pl-[6px] pt-[6px]">
            <div className="flex w-[329px] shrink-0 flex-col">
              <div className={panel + " h-[851px]"}>
                <div className="flex h-[30px] items-center pb-px pl-[6px] text-[17.500px] font-light">
                  <span className="grow tracking-[-0.600px]">Tasks</span>
                  <span className="text-[13px] font-semibold text-[#777]">?</span>
                  <Caret cls="ml-[13px] mt-1 h-1 w-[7px] text-[#666]" />
                  <span className="ml-2 mb-px"><Pin /></span>
                  <Cross cls="ml-2 mr-[10px] size-[9px] text-[#777]" />
                </div>
                <div className="mt-[14px] flex h-8 items-center pb-px pl-[7px] pr-[5px]">
                  <span className="pt-px"><BackCircle color="#666" /></span>
                  <span className="grow whitespace-nowrap pb-px pl-[66px] text-[13px] tracking-[0.060px]">Add Gain Project Record</span>
                  <span className="pb-px"><Burger /></span>
                </div>
                <div className="flex h-[26px] items-center pb-[2px] pl-[6px] text-[11.700px] font-bold">
                  <span className="pt-[2px]"><Arrow state="closed" /></span>
                  <span className="ml-[29px] w-[15px]">1.</span>
                  <span className="tracking-[-0.160px]">Add Gain Project Record</span>
                </div>
                <div className="ml-2 mt-[8px] h-px w-[311px] shrink-0 bg-[#222]" />
                <div className="flex h-9 items-center pl-3 text-[11.700px] tracking-[-0.240px]">Enter the attributes for a new Gain type Project</div>
                <div className="mt-[8px] flex h-[22px] items-center pl-[11px] pr-2 text-[13px]">
                  <span className="w-[78px] pt-px font-bold tracking-[-0.650px] text-[#0079c1]">Parameters</span>
                  <Sep cls="h-4" />
                  <span className="grow pl-[7px] pt-px font-light tracking-[-0.200px]">Environments</span>
                  <svg className="mb-px size-[17px]" viewBox="0 0 17 17">
                    <circle cx="8.500" cy="8.500" r="7.800" fill="#d9eefb" stroke="#4ba3d9" />
                    <path d="M6 6.500q0-2.500 2.500-2.500T11 6.200q0 1.300-1.500 2.100Q8.500 8.900 8.500 10.500M8.500 12v1.500" fill="none" stroke="#1a7dbf" strokeWidth="1.400" />
                  </svg>
                </div>
                <div className="ml-5 mt-[11px] flex w-[297px] flex-col gap-1">
                  <Field label="Project Status" value="1 Gain" kind="select" />
                  <Field label="Agency Tracking Number" value="TEST-TRACKNO-1" />
                  <Field label="Project Name" value="TEST-PRJONAME-1" />
                  <Field label="Project Applicant" value="TEST-APPLICANT-1" />
                  <Field label="Project Location" value="TEST-LOCATION-1" />
                  <Field label="Project Status Date" value="3/29/2017" kind="date" />
                  <Field label="Management Agency" value="TEST-MGMTAGENCY-1" />
                  <Field label="Management Description" value="1 Federal" kind="select" />
                  <Field label="Master Mitigation Bank ID" value="" />
                  <NumberField label="Mitigation Credits" value="20" />
                  <NumberField label="Mitigation Debits" value="0" />
                  <Field label="Conservation Type" value="1 Acquisition" kind="select" />
                  <NumberField label="In-Lieu Fees" value="10" />
                  <Field label="Project APN" value="TEST-APN-1" />
                </div>
                <div className="mt-[25px] flex h-9 items-start">
                  <svg className="ml-1 mt-[7px] h-[10px] w-3" viewBox="0 0 12 10">
                    <path d="M1.500 1v8l6-4z" fill="#fff" stroke="#888" />
                  </svg>
                  <div className="flex h-9 w-[306px] bg-[#dcedd9] pt-[3px]">
                    <svg className="ml-[3px] mt-[2px] h-3 w-4" viewBox="0 0 16 12">
                      <path d="M1 6l4 4L15 1" fill="none" stroke="#5ba760" strokeWidth="3" />
                    </svg>
                    <div className="pl-[3px] text-[11.700px] leading-[15px]">
                      <div className="font-bold tracking-[-0.250px]">Add Gain Project Attributes</div>
                      <div className="tracking-[-0.050px]">Completed successfully</div>
                    </div>
                  </div>
                </div>
                <div className="ml-1 mt-[11px] h-px w-[319px] shrink-0 bg-[#222]" />
                <div className="mt-2 flex h-6 text-[11.700px]">
                  <div className="ml-[138px] flex w-[53px] items-center justify-center border border-[#444] bg-white">Run</div>
                  <div className="ml-[49px] flex w-[63px] items-center justify-center border border-[#444] bg-white">Finish</div>
                </div>
                <div className="mt-1 flex h-[10px] items-center pl-2 text-[11.700px]">
                  <span className="w-[79px] whitespace-nowrap pt-[3px] tracking-[-0.140px]">Progress (1/1)</span>
                  <div className="h-[10px] w-[232px] border border-[#a9a9a9] bg-[#00d426]" />
                </div>
              </div>
              <div className="flex h-6 text-[11.700px] tracking-[-0.100px]">
                <div className="-mt-px flex w-[58px] items-center justify-center border-2 border-[#c6c9c8] bg-[#e5e6e8]">Contents</div>
                <div className="-mt-px flex w-[36px] items-center justify-center border border-t-0 border-l-0 border-[#c6c9c8] bg-[#f7f9f8]">Tasks</div>
              </div>
            </div>

            <div className="relative ml-[6px] flex h-[874px] w-[535px] shrink-0 flex-col">
              <div className="flex h-[22px] items-end justify-between">
                <div className="flex h-[22px] w-[74px] items-center border border-b-0 border-[#a3a5a8] bg-[#c8c9cb] pb-[2px] pl-1 text-[12px]">
                  <svg className="size-4" viewBox="0 0 16 16">
                    <path d="M.5.5h15v15H.5z" fill="#fff" stroke="#555" />
                    <path d="M2 2h12v12H2z" fill="#8fc2a5" />
                    <path d="M14 4l-3 2-1 3-3 1-1 4h8zM2 10l3 2v2H2z" fill="#d6eefa" />
                  </svg>
                  <span className="ml-1 grow">Map</span>
                  <Cross cls="mr-[3px] size-2.5 text-[#222]" w={1.8} />
                </div>
                <Caret cls="mb-[7px] mr-1 h-1 w-2 text-[#555]" />
              </div>
              <div className="flex grow flex-col border border-t-2 border-[#a9abae] border-t-[#c8cacc]">
                <MapCanvas />
                <div className="flex h-[23px] items-center bg-[#f7f9f8] pl-[5px]">
                  <div className="mr-1 flex h-[22px] w-[100px] shrink-0 items-center justify-between border border-[#9c9ea0] bg-white px-1 pt-px text-[11.700px] tracking-[-0.300px]">
                    1:157,779
                    <Caret cls="h-[3px] w-[5px] text-[#555]" />
                  </div>
                  <Sep cls="h-[15px]" />
                  <svg className="ml-[7px] h-[15px] w-4" viewBox="0 0 16 15">
                    <path d="M.5.5h10v6M6 11.500H.5V.5M5.500.5v11M.5 6h10" fill="none" stroke="#85878a" />
                    <path d="M11 7v8M7 11h8" stroke="#3b8fcc" strokeWidth="1.600" />
                  </svg>
                  <svg className="ml-[6px] h-[15px] w-[17px]" viewBox="0 0 17 15">
                    <path d="M.5 1.500h4v3h-4zM11.500 7.500h4v3h-4zM11.500 2h4M13.500 0v4M2 5v6M11 12.500H4" fill="none" stroke="#606265" />
                    <path d="M3 11l8-9" stroke="#3b8fcc" strokeDasharray="2 1" />
                    <path d="M0 12h3v3H0z" fill="#3f8f3f" />
                    <path d="M5 4l6 5" stroke="#8fc4e8" />
                  </svg>
                  <svg className="ml-[6px] size-[14px]" viewBox="0 0 14 14">
                    <path d="M.5.500h13v13H.5zM3.500 0v14M7 0v14M10.500 0v14M0 3.500h14M0 7h14M0 10.500h14" fill="none" stroke="#909295" />
                  </svg>
                  <Sep cls="ml-[9px] h-[15px]" />
                  <span className="w-[184px] shrink-0 text-center text-[11.700px] tracking-[-0.260px]">117.28°W 32.84°N</span>
                  <Sep cls="ml-[3px] h-[15px]" />
                  <svg className="ml-[7px] h-4 w-4 shrink-0" viewBox="0 0 16 16">
                    <path d="M8 1h8v9h-5M9 2l3 4v4M12 6l3-4" fill="none" stroke="#b0b2b4" />
                    <circle cx="5.500" cy="7.500" r="4.500" fill="#eef7fc" stroke="#8bbfe0" />
                    <path d="M5.500 5v5M3 7.500h5" stroke="#6aaedb" strokeWidth="1.400" />
                    <path d="M8.500 11l4 4" stroke="#d8b79d" strokeWidth="2" />
                  </svg>
                  <span className="ml-[4px] w-[110px] shrink-0 whitespace-nowrap text-[11.700px] tracking-[-0.320px] text-[#9a9c9e]">Selected Features: 0</span>
                  <Sep cls="h-[15px]" />
                </div>
              </div>
              <Dialog />
            </div>

            <div className="ml-[6px] flex w-[333px] shrink-0 flex-col">
              <div className={panel + " h-[851px]"}>
                <div className="flex h-[30px] items-center pb-px pl-[6px] text-[17.500px] font-light">
                  <span className="grow tracking-[-0.300px]">Project</span>
                  <Caret cls="mt-1 h-1 w-[7px] text-[#666]" />
                  <span className="ml-2 mb-px"><Pin /></span>
                  <Cross cls="ml-2 mr-[9px] size-[9px] text-[#777]" />
                </div>
                <div className="mt-[14px] flex h-7 items-center pl-2 pr-[10px] text-[13px]">
                  <span className="w-[53px] pt-px font-bold tracking-[-0.300px] text-[#0079c1]">Project</span>
                  <Sep cls="h-[15px]" />
                  <span className="w-[51px] pl-[7px] pt-px font-light">Portal</span>
                  <Sep cls="h-[15px]" />
                  <span className="grow pl-[7px] pt-px font-light tracking-[-0.060px]">Notifications</span>
                  <span className="pb-1"><Burger /></span>
                </div>
                <div className="mt-[3px] flex h-6 items-center pl-[7px]">
                  <BackCircle color="#b4b5b6" />
                  <svg className="ml-[7px] size-4" viewBox="0 0 16 16">
                    <path d="M.5 8.500L8 1l7.500 7.500M2.500 7v8.500h11V7M2.500 5V2.500h2V5" fill="none" stroke="#a9aaab" />
                    <path d="M6.500 15.500v-5h3v5z" fill="#f3e6d8" stroke="#c9b9a8" />
                  </svg>
                  <div className="ml-[7px] flex h-6 w-[269px] items-center border border-[#9a9c9e] bg-white pl-[5px] pr-[6px] text-[11.700px] italic">
                    <span className="grow pt-px tracking-[-0.100px]">Search</span>
                    <svg className="size-3" viewBox="0 0 12 12">
                      <circle cx="7.300" cy="4.500" r="3.600" fill="none" stroke="#555" strokeWidth="1.500" />
                      <path d="M4.500 7.300L.8 11" stroke="#555" strokeWidth="2" />
                    </svg>
                    <Caret cls="ml-[9px] h-[3px] w-[5px] text-[#bbb]" />
                  </div>
                </div>
                <div className="mt-[7px] flex flex-col">
                  {tree.map((n, i) => (
                    <div
                      key={i}
                      className={
                        "flex h-6 items-center text-[11.700px] tracking-[-0.080px] " +
                        (n.level === 0 ? "pl-[12px]" : n.level === 1 ? "pl-[28px]" : "pl-[44px]")
                      }
                    >
                      <Arrow state={n.arrow} />
                      <span className="ml-[11px] flex w-6 pt-[2px]"><TreeIcon kind={n.icon} /></span>
                      <span>{n.label}</span>
                    </div>
                  ))}
                </div>
              </div>
              <div className="flex h-6 whitespace-nowrap text-[11.700px] tracking-[-0.200px]">
                <div className="-mt-px flex w-[45px] items-center justify-center border border-t-0 border-[#c6c9c8] bg-[#f7f9f8]">Project</div>
                <div className="-mt-px flex w-[66px] items-center justify-center border-2 border-l border-r-[1px] border-[#c6c9c8] bg-[#e5e6e8]">Symbology</div>
                <div className="-mt-px flex w-[63px] items-center justify-center border-2 border-x border-[#c6c9c8] bg-[#e5e6e8]">Job Status</div>
                <div className="-mt-px flex w-[78px] items-center border-2 border-x border-[#c6c9c8] bg-[#e5e6e8] pl-1 tracking-[-0.200px]">Geoproces...</div>
                <div className="-mt-px flex w-[81px] items-center border-2 border-l border-[#c6c9c8] bg-[#e5e6e8] pl-1 tracking-[-0.150px]">Modify Feat...</div>
              </div>
            </div>
          </div>
        </div>
        <div className="flex w-[2px] flex-col bg-white">
          <div className="h-[55px] bg-[#cfdcec]" />
          <div className="h-9 bg-[#f0f0f0]" />
          <div className="mt-[12px] h-[10px] bg-[#2a3ad0]" />
          <div className="mt-[50px] h-[5px] bg-[#222]" />
          <div className="mt-[13px] h-[5px] bg-[#222]" />
          <div className="mt-[30px] h-[8px] bg-[#2a5ad0]" />
          <div className="mt-[30px] h-[3px] bg-[#222]" />
          <div className="mt-[50px] h-[8px] bg-[#3f7fc0]" />
          <div className="mt-[28px] h-[5px] bg-[#2b9a3a]" />
          <div className="mt-[50px] h-[2px] bg-[#e02020]" />
          <div className="mt-[120px] h-[2px] bg-[#222]" />
          <div className="mt-[46px] h-[2px] bg-[#e02020]" />
          <div className="mt-[90px] h-[8px] bg-[#3f7fc0]" />
          <div className="mt-[90px] h-[2px] bg-[#e02020]" />
          <div className="mt-[55px] grow bg-[#e8eaec]" />
        </div>
      </div>
      <div className="flex grow bg-[#d5e4f1]">
        <div className="w-[621px]" />
        <div className="w-px bg-[#333]" />
        <div className="w-[7px]" />
        <div className="grow bg-[#b4b7ba]" />
      </div>
    </div>
  );
}
